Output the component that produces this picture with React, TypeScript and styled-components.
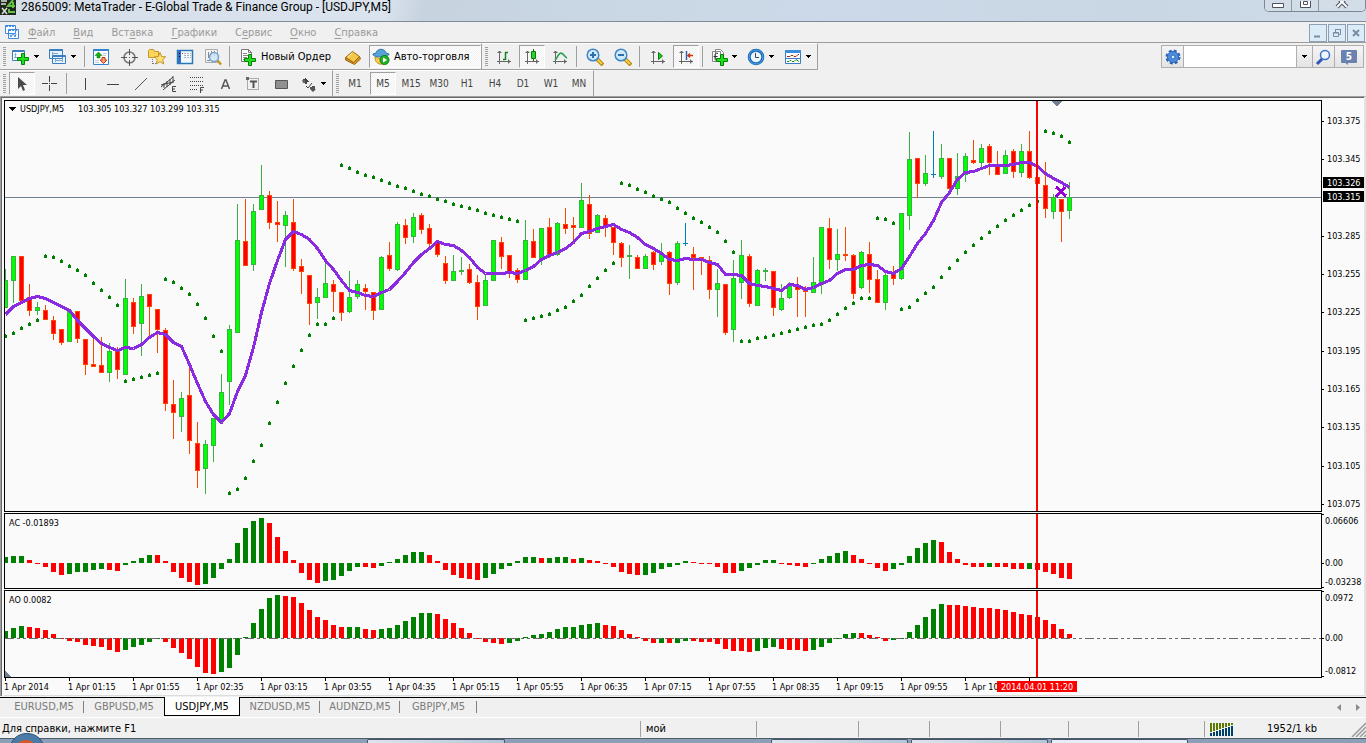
import React from "react";
import styled, { createGlobalStyle, css } from "styled-components";

const GlobalStyle = createGlobalStyle`
  *, *::before, *::after { box-sizing: border-box; }
  body { margin: 0; background: #f0f0f0; }
  button, input { font: inherit; color: inherit; }
`;

const UI_FONT = '"DejaVu Sans Condensed", "DejaVu Sans", sans-serif';
const GREEN = "#008000";
const RED = "#ff0000";

/* ---------- window shell ---------- */

const AppWindow = styled.div`
  display: flex;
  flex-direction: column;
  min-height: 100vh;
  overflow: hidden;
  background: #f0f0f0;
  color: #000;
  font: 11px/14px ${UI_FONT};
`;

const TitleBar = styled.header`
  display: flex;
  align-items: flex-start;
  height: 22px;
  border-bottom: 1px solid #7f8a9b;
  background: linear-gradient(100deg, #d6dfe9 0%, #dbe4ee 28%, #c7d3df 31%, #c9d6e3 42%, #ccd9e8 60%, #c9d6e4 84%, #d0dce8 100%);
`;

const AppTitle = styled.h1`
  flex: 1;
  margin: 0;
  padding-left: 5px;
  font: 400 12px/14px Roboto, "Open Sans", sans-serif;
  white-space: nowrap;
`;

const CaptionButtons = styled.div`
  display: flex;
  height: 12px;
  border: 1px solid #7c8796;
  border-top: 0;
  border-radius: 0 0 5px 5px;
  overflow: hidden;
`;

const CaptionButton = styled.button<{ $wide?: boolean }>`
  width: ${(p) => (p.$wide ? 46 : 27)}px;
  padding: 0;
  border: 0;
  border-right: 1px solid #8d98a6;
  background: #d3dde8;
  line-height: 0;
  &:last-child { border-right: 0; }
`;

const MenuBar = styled.nav`
  display: flex;
  align-items: center;
  height: 21px;
  padding: 1px 0 0 5px;
  border-bottom: 1px solid #9c9c9c;
  line-height: 0;
`;

const MenuItem = styled.button`
  margin-left: 9px;
  padding: 0;
  padding-right: 9px;
  border: 0;
  background: none;
  color: #9a9a9a;
  font: 11px/14px ${UI_FONT};
  &:first-of-type { margin-left: 8px; }
  u { text-underline-offset: 2px; }
`;

const MdiButtons = styled.div`
  display: flex;
  gap: 1px;
  margin-left: auto;
  padding-right: 1px;
`;

const MdiButton = styled.button`
  width: 18px;
  height: 18px;
  padding: 0;
  border: 1px solid #90a0b4;
  background: #dcebf8;
  line-height: 0;
`;

/* ---------- toolbars ---------- */

const ToolbarRow = styled.div`
  display: flex;
`;

const Toolbar = styled.div`
  display: flex;
  align-items: center;
  height: 27px;
  border: 1px solid #a0a0a0;
  border-top-color: #fff;
  border-left: 0;
`;

const LowerToolbar = styled(Toolbar)`
  height: 26px;
  border-bottom: 0;
`;

const Grip = styled.span`
  flex: none;
  width: 3px;
  height: 19px;
  margin: 0 2px 0 3px;
  background: repeating-linear-gradient(#a0a0a0 0 1px, transparent 1px 2px);
`;

const Separator = styled.span<{ $w?: number }>`
  flex: none;
  width: 1px;
  height: 21px;
  margin: 0 ${(p) => (p.$w ?? 5) - 3}px 0 2px;
  background: #a0a0a0;
`;

const pressed = css`
  background: repeating-conic-gradient(#fff 0 25%, #f0f0f0 0 50%) 0 0 / 2px 2px;
  border-color: #a0a0a0 #fff #fff #a0a0a0;
`;

const ToolButton = styled.button<{ $pressed?: boolean }>`
  display: flex;
  align-items: center;
  justify-content: center;
  width: 26px;
  height: 23px;
  margin: 0 1px;
  padding: 0;
  border: 1px solid transparent;
  background: none;
  ${(p) => p.$pressed && pressed}
`;

const DropButton = styled.button`
  display: flex;
  align-items: center;
  gap: 3px;
  width: 37px;
  height: 23px;
  padding: 0 0 0 4px;
  border: 0;
  background: none;
`;

const TextButton = styled.button<{ $pressed?: boolean }>`
  display: flex;
  align-items: center;
  gap: 4px;
  height: 23px;
  padding: 1px 5px 0 2px;
  border: 1px solid transparent;
  background: none;
  white-space: nowrap;
  ${(p) => p.$pressed && pressed}
`;

const OrderButton = styled(TextButton)`
  width: 107px;
  padding-left: 7px;
`;

const AutoButton = styled(TextButton)`
  width: 112px;
  margin-left: 2px;
`;

const PeriodButton = styled(ToolButton)`
  color: #444;
  font-size: 10px;
`;

const SearchGroup = styled.form`
  display: flex;
  flex: none;
  height: 23px;
  margin: 2px 2px 0 auto;
  border: 1px solid #aeaeae;
`;

const SearchButton = styled.button<{ $w: number }>`
  display: flex;
  align-items: center;
  justify-content: center;
  width: ${(p) => p.$w}px;
  padding: 0;
  border: 0;
  border-right: 1px solid #aeaeae;
  background: linear-gradient(#f4f4f4, #e4e4e4);
  &:last-child { border-right: 0; }
`;

const SearchInput = styled.input`
  width: 113px;
  min-width: 0;
  padding: 0 4px;
  border: 0;
  border-right: 1px solid #aeaeae;
  background: #fff;
  outline: none;
`;

const ChatBubble = styled.span`
  position: relative;
  width: 16px;
  height: 13px;
  border-radius: 1px;
  background: #6b82b0;
  color: #fff;
  font: 700 10px/13px ${UI_FONT};
  text-align: center;
  &::after {
    content: "";
    position: absolute;
    left: 3px;
    top: 12px;
    border: solid transparent;
    border-width: 0 0 4px 4px;
    border-right: 0;
    border-top: 3px solid #6b82b0;
  }
`;

/* ---------- chart ---------- */

const ChartWindow = styled.main`
  display: flex;
  flex-direction: column;
  gap: 1px;
  padding: 3px 0 0 3px;
  border: solid #a0a0a0;
  border-width: 1px 0 0 1px;
  border-right: 2px solid #e3e3e3;
  background: #fafafa;
  box-shadow: inset 1px 1px 0 #696969;
`;

const ChartPanel = styled.section<{ $h: number }>`
  display: flex;
  height: ${(p) => p.$h}px;
  svg { display: block; }
`;

const Plot = styled.div`
  flex: 1;
  min-width: 0;
  border: 1px solid #000;
  overflow: hidden;
`;

const AxisText = styled.text<{ $fill?: string }>`
  font: 9px ${UI_FONT};
  fill: ${(p) => p.$fill ?? "#000"};
  white-space: pre;
`;

const TimeAxis = styled.div`
  height: 18px;
  margin-top: -1px;
  border-bottom: 1px solid #dcdcdc;
  svg { display: block; }
`;

/* ---------- bottom ---------- */

const TabStrip = styled.div`
  display: flex;
  align-items: flex-start;
  height: 20px;
  margin-top: 1px;
  border-top: 1px solid #000;
`;

const ChartTab = styled.button<{ $active?: boolean }>`
  width: 80px;
  height: 19px;
  padding: 0 0 2px;
  border: 0;
  background: none;
  color: #7a7a7a;
  font: 11px/16px ${UI_FONT};
  ${(p) =>
    p.$active
      ? css`
          width: 76px;
          margin-top: -1px;
          padding: 1px 0 0;
          border: 1px solid #000;
          border-top: 0;
          background: #fff;
          color: #000;
        `
      : css`
          background: linear-gradient(#808080, #808080) right 3px / 1px 12px no-repeat;
        `}
`;

const FirstTab = styled(ChartTab)`
  margin-left: 4px;
`;

const PlainTab = styled(ChartTab)`
  background: none;
`;

const LastTab = styled(ChartTab)`
  width: 77px;
`;

const TabScroll = styled.div`
  display: flex;
  gap: 8px;
  margin-left: auto;
  padding: 3px 4px 0 0;
`;

const ScrollButton = styled.button`
  width: 9px;
  height: 12px;
  padding: 0;
  border: 0;
  background: none;
  line-height: 0;
`;

const StatusBar = styled.footer`
  display: flex;
  align-items: center;
  height: 21px;
  padding-top: 2px;
  border-top: 1px solid #fff;
`;

const StatusCell = styled.div<{ $w?: number }>`
  display: flex;
  align-items: center;
  ${(p) => (p.$w ? `width: ${p.$w}px;` : "flex: 1;")}
  height: 16px;
  padding-left: ${(p) => (p.$w ? 5 : 2)}px;
  border-left: ${(p) => (p.$w ? "1px solid #a0a0a0" : "0")};
  white-space: nowrap;
`;

const Traffic = styled.span`
  flex: 1;
  padding-left: 33px;
`;

const Taskbar = styled.div`
  display: flex;
  height: 5px;
  border-top: 1px solid #4e5c6c;
  background: #8ba0b6;
`;

const TaskSpacer = styled.span<{ $w: number }>`
  width: ${(p) => p.$w}px;
`;

const TaskItem = styled.span<{ $w: number; $light?: boolean }>`
  width: ${(p) => p.$w}px;
  margin-right: 3px;
  border: 1px solid #45566a;
  border-bottom: 0;
  border-radius: 2px 2px 0 0;
  background: ${(p) => (p.$light ? "#e6edf4" : "linear-gradient(90deg, #dde5ee, #b4c5d8)")};
`;

const StartOrb = styled.span`
  position: relative;
  z-index: 1;
  width: 34px;
  height: 9px;
  margin: -6px 0 0 10px;
  line-height: 0;
`;

/* ---------- icons ---------- */

type IconProps = { children: React.ReactNode; w?: number; h?: number };
const Icon = ({ children, w = 18, h = 18 }: IconProps) => (
  <svg width={w} height={h} viewBox={`0 0 ${w} ${h}`} fill="none" aria-hidden="true">
    {children}
  </svg>
);

const Caret = () => (
  <Icon w={7} h={4}><path d="M1 0h5v1H5v1H4v1H3V2H2V1H1z" fill="#000" /></Icon>
);

const Plus = ({ x, y }: { x: number; y: number }) => (
  <path d={`M${x + 4.5} ${y + 0.5}h3v4h4v3h-4v4h-3v-4h-4v-3h4z`} fill="#1fe01f" stroke="#068006" />
);

const AppLogo = () => (
  <Icon w={16} h={16}>
    <path d="M0 0h16v15H0z" fill="#20261f" />
    <path d="M1 1h6M1 4h5M2 8l5 6M7 8l-5 6" stroke="#d9e4d2" strokeWidth="1.500" />
    <path d="M13 0L8 6h7M13 2v6M9 9v3h6" stroke="#66c044" strokeWidth="2" />
  </Icon>
);

const DocIcon = () => (
  <Icon w={15} h={15}>
    <path d="M.5.500h10v8H.5zM3.500 4.500h10v9h-10z" fill="#fff" stroke="#3d8be0" />
    <path d="M1 1.500h10M4 5.500h10" stroke="#3d8be0" strokeDasharray="2 1" />
    <path d="M5 9.500l1 2.500 2-4 2 4 1-3" stroke="#3d8be0" />
  </Icon>
);

const NewChartIcon = () => (
  <Icon>
    <path d="M.5 2.500h12v10H.5z" fill="#fff" stroke="#3b7dc0" />
    <path d="M1 3h11" stroke="#3b7dc0" strokeWidth="2" />
    <path d="M3.500 5v5M2 9.500h7M2.500 6.500h2" stroke="#7ea8cc" />
    <Plus x={5} y={5} />
  </Icon>
);
const ProfilesIcon = () => (
  <Icon>
    <path d="M.5 1.500h13v9H.5zM3.500 7.500h13v8h-13z" fill="#e9f3fc" stroke="#3b7dc0" />
    <path d="M1 2h12M4 8h12" stroke="#3b7dc0" strokeWidth="2" />
    <path d="M3 5.500h6M3.500 4v3M6 12.500h8M6.500 11v3M13.500 11v3" stroke="#7ea8cc" />
  </Icon>
);
const MarketIcon = () => (
  <Icon>
    <path d="M1.500 1.500h15v15h-15z" fill="#fff" stroke="#3184cf" />
    <path d="M1 2h16" stroke="#3184cf" strokeWidth="2" />
    <path d="M11 5.500h4M11 7.500h3M3 12.500h4M3 14.500h4" stroke="#b8cce0" />
    <path d="M6.500 4L10 7.500H8V10H5V7.500H3z" fill="#10b010" stroke="#087008" strokeWidth=".5" />
    <path d="M11.500 15.500L15 12h-2v-2.500h-3V12H8z" fill="#f8a070" stroke="#c03a10" />
  </Icon>
);
const TargetIcon = () => (
  <Icon>
    <circle cx="9.500" cy="9.500" r="5.500" stroke="#777" strokeWidth="1.500" />
    <path d="M9.500 1v6M9.500 12v6M1 9.500h6M12 9.500h6" stroke="#555" />
    <path d="M9 9.500h1" stroke="#555" />
  </Icon>
);
const StarFolderIcon = () => (
  <Icon>
    <path d="M.5 2.500l1-1h4l1 2h4v6H.5z" fill="#ffd65a" stroke="#c4932a" />
    <path d="M4.500 11v5M5 15.500h3" stroke="#777" strokeDasharray="1 1" />
    <path d="M12 4.500l1.700 4 4 .3-3 2.800 1 4.400-3.700-2.300L8.300 16l1-4.400-3-2.800 4-.3z" fill="#ffe070" stroke="#c4932a" />
  </Icon>
);
const NavigatorIcon = () => (
  <Icon>
    <path d="M1.500 2.500h15v13h-15z" fill="#f4f9fe" stroke="#2a78b8" strokeWidth="1.500" />
    <path d="M2 3v12h3V3z" fill="#2f70c0" />
    <path d="M3.500 5v1M3.500 8v1" stroke="#111" />
    <path d="M8 5.500h7M8 7.500h7M8 9.500h7" stroke="#a8b4c0" strokeDasharray="2 1" />
    <path d="M6 5.500h1" stroke="#d22" />
  </Icon>
);
const TesterIcon = () => (
  <Icon>
    <path d="M1.500 1.500h12v13h-12z" fill="#f4f4f4" stroke="#aaa" />
    <path d="M4.500 4v6M7.500 3v6M10.500 3v5M3 12.500h3" stroke="#888" />
    <circle cx="10" cy="9" r="4.500" fill="#cfe6f8" fillOpacity=".8" stroke="#74a6d2" strokeWidth="1.500" />
    <path d="M13.500 12.500l3.500 4" stroke="#c99322" strokeWidth="2.500" />
  </Icon>
);
const OrderIcon = () => (
  <Icon w={17}>
    <path d="M1.500 1.500h7l3 3v9h-10z" fill="#fff" stroke="#777" />
    <path d="M8.500 1.500v3h3" stroke="#777" />
    <path d="M3 5.500h4M3 7.500h6M3 9.500h4M3 11.500h3" stroke="#888" />
    <Plus x={4} y={6} />
  </Icon>
);
const BookIcon = () => (
  <Icon>
    <path d="M1.500 9.500l7-6 7 5-6 6z" fill="#f5c74a" stroke="#9f6a10" />
    <path d="M1.500 9.500V12l9 4.500 6-5.500-1-2.500-6 6z" fill="#d59420" stroke="#9f6a10" />
    <path d="M4 9l4-4" stroke="#fff0b8" />
  </Icon>
);
const AutoIcon = () => (
  <Icon>
    <path d="M4 5c1-5 9-5 10 0l3 1c0 4-17 4-16 0z" fill="#56a4d6" stroke="#2d79ad" />
    <path d="M3 9c0 10 12 9 12 0-4 2-8 2-12 0z" fill="#ffd14b" stroke="#bd8b1c" />
    <circle cx="12.500" cy="12" r="4.500" fill="#26b526" stroke="#0b7a0b" />
    <path d="M11 9.500l4 2.500-4 2.500z" fill="#fff" />
  </Icon>
);

const Axes = () => <path d="M4.500 3v13M2 13.500h14M2.500 4.500h4M3.500 3.500h2M13.500 11.500v4M14.500 12.500v2" stroke="#666" />;
const BarsIcon = () => <Icon><Axes /><path d="M10.500 4v8M10 4.500h3M8 11.500h2" stroke="#16831a" strokeWidth="1.500" /></Icon>;
const CandlesIcon = () => <Icon><Axes /><path d="M10.500 1v12" stroke="#0a6a0a" /><path d="M8.500 3.500h4v7h-4z" fill="#28d428" stroke="#0a7a0a" /></Icon>;
const LineIcon = () => <Icon><Axes /><path d="M4 12c3-2 3-7 6-7 3 1 4 4 6 5" stroke="#23a04a" strokeWidth="1.500" /></Icon>;
const ScrollIcon = () => <Icon><Axes /><path d="M9.500 4.500l4 3.500-4 3.500z" fill="#24c424" stroke="#0a7a0a" /></Icon>;
const ShiftIcon = () => <Icon><Axes /><path d="M9.500 3v9" stroke="#2a66a8" strokeWidth="1.500" /><path d="M16 7.500h-5M13 5.500l-2 2 2 2" stroke="#c33a10" strokeWidth="1.500" /></Icon>;

const ZoomIcon = ({ plus }: { plus?: boolean }) => (
  <Icon>
    <path d="M11 11l6 6" stroke="#b8860b" strokeWidth="4" />
    <path d="M11 11l5 5" stroke="#f0cf4a" strokeWidth="2" />
    <circle cx="7" cy="7" r="5.800" fill="#cfe9fb" stroke="#3f86c6" strokeWidth="1.500" />
    <path d={plus ? "M4 7h6M7 4v6" : "M4 7h6"} stroke="#2f6ea8" strokeWidth="2" />
  </Icon>
);
const IndicatorIcon = () => (
  <Icon>
    <path d="M5.500 1.500h5l3 3v8h-8zM2.500 3.500h8v10h-8z" fill="#fff" stroke="#888" />
    <path d="M8 5.500c-2-1-3 0-3 2v4M3.500 8.500h4" stroke="#333" />
    <Plus x={6} y={6} />
  </Icon>
);
const ClockIcon = () => (
  <Icon>
    <circle cx="9" cy="9" r="6.800" fill="#eaf4fd" stroke="#1766b4" strokeWidth="3" />
    <circle cx="9" cy="9" r="7" stroke="#51a5ec" />
    <path d="M8.500 5v4.500H12" stroke="#444" />
  </Icon>
);
const TemplateIcon = () => (
  <Icon>
    <path d="M1.500 2.500h15v13h-15z" fill="#fff" stroke="#3b7dc0" />
    <path d="M1 3.500h16" stroke="#3b8ddb" strokeWidth="3" />
    <path d="M2 10.500h14" stroke="#3b7dc0" />
    <path d="M3 8.500h3l1-1h2l1 1h2l2-2h1" stroke="#a02a10" />
    <path d="M3 13.500h2l1-1h1l1 1h2l2-2 3 2" stroke="#1a8a2a" />
  </Icon>
);

const CursorIcon = () => <Icon><path d="M5 2v12l3-3 2 5 2-1-2-5h4z" fill="#4a4a4a" /></Icon>;
const CrossIcon = () => <Icon><path d="M8.500 1v6M8.500 10v6M1 8.500h6M10 8.500h6M8 8.500h1" stroke="#444" /></Icon>;
const VLineIcon = () => <Icon><path d="M9.500 3v12" stroke="#444" /></Icon>;
const HLineIcon = () => <Icon><path d="M3 9.500h12" stroke="#444" /></Icon>;
const TrendIcon = () => <Icon><path d="M3 15L15 3" stroke="#555" /></Icon>;
const ChannelIcon = () => (
  <Icon>
    <path d="M1 12L13 2M3 15L15 5M4 8v5M7 6v6M10 4v6M13 1v7M1 10l12-3" stroke="#444" />
    <path d="M16 11.500h-3.500v5H16M12.500 14H15" stroke="#444" />
  </Icon>
);
const FiboIcon = () => (
  <Icon>
    <path d="M2 2.500h13M2 6.500h13M2 10.500h13M2 14.500h8" stroke="#444" strokeDasharray="1 1" />
    <path d="M16 12.500h-3.500V18M12.500 15H15" stroke="#444" />
  </Icon>
);
const LetterIcon = () => <Icon><path d="M5.500 14L9 5h1l3.500 9M7 11h5" stroke="#555" strokeWidth="1.500" /></Icon>;
const LabelIcon = () => (
  <Icon>
    <path d="M3.500 3.500h11v11h-11z" stroke="#666" strokeDasharray="1 1" />
    <path d="M6 6.500h7M9.500 6v7" stroke="#555" strokeWidth="2" />
    <path d="M2 2h3v3H2z" fill="#666" />
  </Icon>
);
const RectIcon = () => <Icon><path d="M3.500 5.500h12v8h-12z" fill="#909090" stroke="#555" /></Icon>;
const ArrowsIcon = () => (
  <Icon>
    <path d="M6 3h1v1h1v1h1v1h1v1H8v2H6V7H4V6h1V5H4V4h2z" fill="#444" />
    <path d="M3 5h3v3H4z" fill="#666" />
    <path d="M7 11l2 2 4-5" stroke="#444" />
    <path d="M11 12h2v-1h3v3h1l-3 3-3-3z" fill="#555" />
  </Icon>
);

const GearIcon = () => (
  <Icon>
    <circle cx="9" cy="9" r="5.500" fill="#4d8ee0" stroke="#2b63b4" />
    <circle cx="9" cy="9" r="6.500" stroke="#2b63b4" strokeWidth="2" strokeDasharray="3 2.100" />
    <circle cx="9" cy="9" r="2" fill="#dcecff" stroke="#2b63b4" />
  </Icon>
);
const SearchIcon = () => (
  <Icon>
    <path d="M7 11l-5 5" stroke="#2a56b8" strokeWidth="3" />
    <circle cx="10" cy="7" r="4.500" fill="#eef7ff" stroke="#3f6fc8" strokeWidth="1.500" />
  </Icon>
);

/* ---------- market data, in plot pixels ---------- */

// Candle: kind, high, body top, body bottom, low
type Candle = ["g" | "r" | "b", number, number, number, number];
const candles: Candle[] = [
  ["g",269,280,308,308],["g",256,256,281,303],["r",256,256,301,301],["r",284,297,311,316],["g",302,307,311,315],
  ["r",305,310,320,320],["r",316,320,334,340],["r",329,329,343,345],["g",310,310,342,342],["r",311,311,339,343],
  ["r",339,339,365,375],["r",334,364,367,367],["r",337,365,373,373],["g",343,351,373,382],["r",347,351,370,379],
  ["g",279,298,375,375],["r",298,302,327,334],["g",284,296,324,356],["r",294,294,307,336],["r",309,309,330,353],
  ["r",328,330,404,411],["r",380,404,413,439],["g",392,398,417,432],["r",366,395,441,454],["r",422,443,471,488],
  ["g",440,444,469,494],["g",418,418,446,462],["g",374,392,421,423],["g",325,329,382,405],["g",204,240,333,333],
  ["r",199,241,266,266],["g",204,211,265,271],["g",165,195,210,210],["r",191,195,223,229],["r",201,222,225,242],
  ["g",211,215,226,267],["r",199,222,269,271],["r",259,266,272,294],["r",275,275,304,325],["g",288,297,303,319],
  ["g",259,283,298,298],["r",280,284,292,312],["r",292,292,313,321],["g",271,297,312,313],["g",280,284,297,299],
  ["r",284,288,292,310],["r",292,292,311,320],["g",256,257,310,310],["r",242,255,269,271],["g",222,224,270,271],
  ["r",219,225,238,244],["g",213,217,237,243],["r",213,215,230,234],["r",224,228,244,248],["r",242,242,255,257],
  ["r",256,263,281,284],["g",255,271,281,281],["g",257,270,272,275],["r",264,269,283,284],["r",275,282,307,320],
  ["g",275,280,306,306],["g",240,240,281,281],["r",237,242,257,269],["r",255,255,272,278],["r",268,270,280,283],
  ["g",220,240,280,280],["r",229,241,258,258],["g",228,228,260,265],["r",218,227,256,258],["g",222,223,255,256],
  ["r",208,224,229,234],["r",217,225,228,243],["g",183,200,228,228],["r",195,204,234,239],["g",214,215,233,233],
  ["r",215,218,226,237],["r",227,227,243,255],["r",242,243,258,267],["g",245,255,257,279],["r",255,257,269,269],
  ["g",254,256,269,269],["r",251,252,265,270],["g",243,254,262,265],["r",251,252,284,295],["g",241,243,283,285],
  ["b",223,243,244,246],["r",247,254,258,290],["r",257,257,261,275],["r",256,260,290,299],["g",269,283,290,317],
  ["r",284,284,333,335],["g",260,278,330,342],["g",240,255,283,299],["r",254,256,304,307],["g",269,270,306,306],
  ["g",268,270,272,281],["r",271,271,308,316],["g",284,298,310,311],["g",282,286,298,299],["r",277,286,290,317],
  ["r",286,288,292,317],["g",257,282,293,293],["g",227,227,285,294],["r",218,228,260,269],["g",229,254,260,271],
  ["r",227,254,256,261],["r",254,255,294,299],["g",251,252,288,289],["r",242,254,280,293],["r",270,279,303,303],
  ["g",272,275,303,310],["r",266,273,279,285],["g",213,213,279,280],["g",132,159,216,230],["r",158,158,184,198],
  ["g",155,173,184,186],["b",131,174,175,178],["g",144,158,177,179],["r",158,158,189,192],["g",153,176,189,195],
  ["g",153,156,175,182],["r",140,160,163,164],["g",144,148,163,167],["r",144,146,163,175],["r",151,165,175,175],
  ["g",150,155,174,174],["r",149,151,172,178],["g",144,151,173,177],["r",131,151,178,179],["r",163,177,184,192],
  ["r",162,185,209,218],["g",194,197,212,219],["r",199,199,212,242],["g",182,197,211,219],
];

const average = [
  314,306,302,298,296,298,302,306,310,320,328,336,343,347,350,347,348,344,337,332,334,342,346,364,383,401,414,422,
  413,391,375,347,312,283,260,239,231,234,239,248,260,269,280,290,292,295,296,292,289,281,272,262,254,248,241,244,
  245,250,257,267,273,273,273,272,273,270,266,259,255,252,248,242,233,231,228,226,224,229,232,237,244,248,253,259,
  260,258,259,259,262,264,274,274,275,283,285,286,288,290,284,285,289,287,283,280,273,269,269,265,264,265,271,273,
  268,256,243,233,220,202,192,179,172,171,168,165,165,165,164,162,162,166,173,178,182,187,
];

const sar = [
  336,333,328,324,320,256,257,261,266,270,275,283,290,297,305,381,379,377,375,373,279,282,288,294,304,318,336,351,
  493,489,478,461,445,423,402,383,366,350,335,324,324,318,165,168,172,175,177,180,183,186,188,191,194,196,199,201,
  204,206,208,210,213,215,217,219,221,320,318,316,314,310,307,301,295,286,278,270,263,183,185,189,192,196,199,202,
  208,213,218,222,227,232,241,252,341,341,338,337,335,333,331,329,327,325,324,320,314,308,303,298,298,218,219,223,
  309,307,300,293,287,277,268,260,252,245,238,232,226,220,215,210,205,201,131,133,136,142,
];

const acBars = [
  6,7,7,3,-1,-4,-9,-12,-11,-9,-9,-7,-6,-7,-8,-2,2,5,8,8,2,-9,-15,-19,-22,-21,-15,-6,4,20,35,42,45,40,26,12,3,-10,
  -17,-20,-18,-17,-13,-8,-4,-4,-5,-3,1,4,8,11,11,8,2,-7,-12,-15,-16,-17,-15,-11,-6,-3,2,6,6,5,5,6,6,4,5,3,2,-1,-4,
  -9,-11,-12,-12,-10,-6,-4,-2,2,1,-1,-1,-4,-10,-10,-8,-5,-2,3,3,-1,-2,-3,-4,-1,4,7,10,12,8,4,-1,-5,-8,-6,-2,7,15,
  20,23,21,11,4,-2,-4,-4,-4,-4,-4,-6,-6,-6,-7,-9,-11,-15,-16,
];
const acColors =
  "gggrrrrrgggggrrggggrrrrrrggggggggrrrrrrrgggggrrggggggrrrrrrrgggggggrgggrgrrrrrrrggggggrrrrrrgggggrrrrgggggrrrrrggggggrrrrrrgrrrrgrrrrr";

const aoBars = [
  7,10,12,11,10,8,4,-1,-3,-4,-7,-8,-9,-12,-14,-12,-9,-7,-4,-1,-4,-10,-15,-21,-29,-35,-36,-34,-30,-17,1,15,29,40,43,
  42,41,35,28,21,18,13,11,11,11,9,8,9,10,13,17,21,25,25,24,19,15,10,5,-1,-4,-5,-6,-5,-3,1,3,4,6,9,11,11,13,14,15,
  13,12,8,4,1,-3,-5,-5,-5,-5,-3,-3,-4,-4,-6,-11,-13,-13,-14,-13,-10,-9,-11,-12,-12,-13,-12,-9,-5,-1,4,5,5,3,1,-3,
  -2,-1,6,13,21,29,34,33,33,32,31,30,30,29,28,26,24,23,21,18,14,9,4,
];
const aoColors =
  "gggrrrrrrrrrrrrgggggrrrrrrrggggggggrrrrrrrrggrrgggggggrrrrrrrrrggggggggggggrrrrrrrgrggrrrrrrrrgggrrrrggggggrrrrgggggggrrrrrrrrrrrrrrrr";

const PLOT_TOP = 101;
const STEP = 8;
const priceTicks: [number, string][] = [
  [121, "103.375"], [159, "103.345"], [236, "103.285"], [274, "103.255"], [312, "103.225"], [351, "103.195"],
  [389, "103.165"], [427, "103.135"], [466, "103.105"], [504, "103.075"],
];
const times = ["2014", "01:15", "01:55", "02:35", "03:15", "03:55", "04:35", "05:15", "05:55", "06:35", "07:15", "07:55", "08:35", "09:15", "09:55", "10:35"];

const CandleMark = ({ c, x }: { c: Candle; x: number }) => {
  const [kind, high, top, bottom, low] = c;
  const edge = { g: "#3cb043", r: "#ff4500", b: "#0080c0" }[kind];
  return (
    <>
      <rect x={x} y={high} width="1" height={Math.max(low - high, 1)} fill={edge} />
      <rect x={x - 2} y={top} width="5" height={bottom - top} fill={edge} />
      {bottom - top > 2 && (
        <rect x={x - 1} y={top + 1} width="3" height={bottom - top - 2} fill={kind === "g" ? "#00ff00" : RED} />
      )}
    </>
  );
};

const Bars = ({ data, colors, base }: { data: number[]; colors: string; base: number }) => (
  <>
    {data.map((v, i) => (
      <rect key={i} x={i * STEP - 2} y={v > 0 ? base - v : base} width="5" height={Math.abs(v)} fill={colors[i] === "g" ? GREEN : RED} />
    ))}
  </>
);

const Cursor = () => <rect x="1031" y="0" width="2" height="100%" fill={RED} />;

const PricePanel = () => (
  <ChartPanel $h={412} aria-label="USDJPY,M5">
    <Plot>
      <svg width="100%" height="410" shapeRendering="crispEdges">
        <rect x="0" y="96" width="100%" height="1" fill="#708090" />
        <path d="M1046 0h11l-5 5z" fill="#708090" />
        <g transform={`translate(0 ${-PLOT_TOP})`}>
          {candles.map((c, i) => <CandleMark key={i} c={c} x={i * STEP} />)}
          <polyline points={average.map((y, i) => `${i * STEP + 0.5},${y + 0.5}`).join(" ")} fill="none" stroke="#8a2be2" strokeWidth="3" strokeLinejoin="round" />
          {sar.map((y, i) => (
            <path key={i} d={`M${i * STEP} ${y - 2}h1v1h1v3h-3v-3h1z`} fill={GREEN} />
          ))}
          <path d="M1051 187l10 9M1060 187l-9 10" stroke="#9400d3" strokeWidth="3" />
        </g>
        <Cursor />
        <path d="M3 6h8l-4 4z" fill="#000" />
        <AxisText x="15" y="11">USDJPY,M5</AxisText>
        <AxisText x="73" y="11">103.305 103.327 103.299 103.315</AxisText>
      </svg>
    </Plot>
    <svg width="42" height="412">
      {priceTicks.map(([y, label]) => (
        <React.Fragment key={label}>
          <rect x="0" y={y - 100} width="2" height="1" fill="#000" />
          <AxisText x="5" y={y - 97}>{label}</AxisText>
        </React.Fragment>
      ))}
      <rect x="1" y="77" width="41" height="11" fill="#000" />
      <AxisText x="5" y="86" $fill="#fff">103.326</AxisText>
      <rect x="1" y="91" width="41" height="11" fill="#000" />
      <AxisText x="5" y="100" $fill="#fff">103.315</AxisText>
    </svg>
  </ChartPanel>
);

type IndicatorProps = { height: number; title: string; data: number[]; colors: string; base: number; dashed?: boolean; labels: [number, string][] };
const IndicatorPanel = ({ height, title, data, colors, base, dashed, labels }: IndicatorProps) => (
  <ChartPanel $h={height} aria-label={title}>
    <Plot>
      <svg width="100%" height={height - 2} shapeRendering="crispEdges">
        <Bars data={data} colors={colors} base={base} />
        {dashed && <line x1="0" x2="100%" y1={base + 0.5} y2={base + 0.5} stroke="#696969" strokeDasharray="9 3 3 3 3 3" />}
        {dashed && <path d={`M0 ${height - 8}l6 6H0z`} fill="#708090" />}
        <Cursor />
        <AxisText x="4" y="12">{title}</AxisText>
      </svg>
    </Plot>
    <svg width="42" height={height}>
      {[1, base + 1, height - 2].map((y) => <rect key={y} x="0" y={y} width="2" height="1" fill="#000" />)}
      {labels.map(([y, label]) => <AxisText key={label} x="3" y={y}>{label}</AxisText>)}
    </svg>
  </ChartPanel>
);

const Periods = ["M1", "M5", "M15", "M30", "H1", "H4", "D1", "W1", "MN"];

export default function App() {
  return (
    <AppWindow>
      <GlobalStyle />
      <TitleBar>
        <AppLogo />
        <AppTitle>2865009: MetaTrader - E-Global Trade &amp; Finance Group - [USDJPY,M5]</AppTitle>
        <CaptionButtons>
          <CaptionButton aria-label="Свернуть"><Icon w={14} h={10}><path d="M1.500 2.500h11v4h-11z" fill="#fff" stroke="#4b5262" /></Icon></CaptionButton>
          <CaptionButton aria-label="Развернуть"><Icon w={14} h={10}><path d="M2.500-2.500h10v9h-10z" fill="#fff" stroke="#4b5262" /><path d="M5.500.5h4v3h-4z" stroke="#4b5262" /></Icon></CaptionButton>
          <CaptionButton $wide aria-label="Закрыть"><Icon w={14} h={10}><path d="M2-4l10 10M12-4L2 6" stroke="#4b5262" strokeWidth="4" /><path d="M2-4l10 10M12-4L2 6" stroke="#fff" strokeWidth="2" /></Icon></CaptionButton>
        </CaptionButtons>
      </TitleBar>

      <MenuBar>
        <DocIcon />
        <MenuItem><u>Ф</u>айл</MenuItem>
        <MenuItem><u>В</u>ид</MenuItem>
        <MenuItem>Вст<u>а</u>вка</MenuItem>
        <MenuItem><u>Г</u>рафики</MenuItem>
        <MenuItem>С<u>е</u>рвис</MenuItem>
        <MenuItem><u>О</u>кно</MenuItem>
        <MenuItem><u>С</u>правка</MenuItem>
        <MdiButtons>
          <MdiButton aria-label="Свернуть окно"><Icon w={16} h={16}><path d="M4 11.500h6" stroke="#7b8da3" strokeWidth="2" /></Icon></MdiButton>
          <MdiButton aria-label="Восстановить окно"><Icon w={16} h={16}><path d="M6.500 8V4.500h5v5H9M6 4.500h6M4.500 7.500h5v4h-5zM4 8h6" stroke="#7b8da3" /></Icon></MdiButton>
          <MdiButton aria-label="Закрыть окно"><Icon w={16} h={16}><path d="M5 5l6 6M11 5l-6 6" stroke="#7b8da3" strokeWidth="2" /></Icon></MdiButton>
        </MdiButtons>
      </MenuBar>

      <ToolbarRow>
        <Toolbar>
          <Grip />
          <DropButton aria-label="Новый график"><NewChartIcon /><Caret /></DropButton>
          <DropButton aria-label="Профили"><ProfilesIcon /><Caret /></DropButton>
          <Separator />
          <ToolButton aria-label="Обзор рынка"><MarketIcon /></ToolButton>
          <ToolButton aria-label="Окно данных"><TargetIcon /></ToolButton>
          <ToolButton aria-label="Навигатор"><StarFolderIcon /></ToolButton>
          <ToolButton aria-label="Терминал"><NavigatorIcon /></ToolButton>
          <ToolButton aria-label="Тестер стратегий"><TesterIcon /></ToolButton>
          <Separator />
          <OrderButton><OrderIcon />Новый Ордер</OrderButton>
          <ToolButton aria-label="MetaEditor"><BookIcon /></ToolButton>
          <AutoButton $pressed aria-pressed="true"><AutoIcon />Авто-торговля</AutoButton>
        </Toolbar>
        <Toolbar>
          <Grip />
          <ToolButton aria-label="Бары"><BarsIcon /></ToolButton>
          <ToolButton $pressed aria-label="Свечи"><CandlesIcon /></ToolButton>
          <ToolButton aria-label="Линия"><LineIcon /></ToolButton>
          <Separator $w={7} />
          <ToolButton aria-label="Увеличить"><ZoomIcon plus /></ToolButton>
          <ToolButton aria-label="Уменьшить"><ZoomIcon /></ToolButton>
          <Separator $w={7} />
          <ToolButton aria-label="Автопрокрутка"><ScrollIcon /></ToolButton>
          <ToolButton $pressed aria-label="Сдвиг графика"><ShiftIcon /></ToolButton>
          <Separator $w={6} />
          <DropButton aria-label="Индикаторы"><IndicatorIcon /><Caret /></DropButton>
          <DropButton aria-label="Периоды"><ClockIcon /><Caret /></DropButton>
          <DropButton aria-label="Шаблоны"><TemplateIcon /><Caret /></DropButton>
        </Toolbar>
        <SearchGroup>
          <SearchButton type="button" $w={22} aria-label="Настройки"><GearIcon /></SearchButton>
          <SearchInput aria-label="Поиск" />
          <SearchButton type="button" $w={16} aria-label="История поиска"><Caret /></SearchButton>
          <SearchButton type="button" $w={22} aria-label="Найти"><SearchIcon /></SearchButton>
          <SearchButton type="button" $w={28} aria-label="Сообщения"><ChatBubble>5</ChatBubble></SearchButton>
        </SearchGroup>
      </ToolbarRow>

      <ToolbarRow>
        <LowerToolbar>
          <Grip />
          <ToolButton $pressed aria-label="Курсор"><CursorIcon /></ToolButton>
          <ToolButton aria-label="Перекрестие"><CrossIcon /></ToolButton>
          <Separator $w={7} />
          <ToolButton aria-label="Вертикальная линия"><VLineIcon /></ToolButton>
          <ToolButton aria-label="Горизонтальная линия"><HLineIcon /></ToolButton>
          <ToolButton aria-label="Трендовая линия"><TrendIcon /></ToolButton>
          <ToolButton aria-label="Канал"><ChannelIcon /></ToolButton>
          <ToolButton aria-label="Линии Фибоначчи"><FiboIcon /></ToolButton>
          <ToolButton aria-label="Текст"><LetterIcon /></ToolButton>
          <ToolButton aria-label="Метка"><LabelIcon /></ToolButton>
          <ToolButton aria-label="Прямоугольник"><RectIcon /></ToolButton>
          <DropButton aria-label="Стрелки"><ArrowsIcon /><Caret /></DropButton>
        </LowerToolbar>
        <LowerToolbar>
          <Grip />
          {Periods.map((p) => (
            <PeriodButton key={p} $pressed={p === "M5"}>{p}</PeriodButton>
          ))}
        </LowerToolbar>
      </ToolbarRow>

      <ChartWindow>
        <PricePanel />
        <IndicatorPanel height={76} title="AC -0.01893" data={acBars} colors={acColors} base={49} labels={[[11, "0.06606"], [53, "0.00"], [72, "-0.03238"]]} />
        <IndicatorPanel height={88} title="AO 0.0082" data={aoBars} colors={aoColors} base={47} dashed labels={[[11, "0.0972"], [51, "0.00"], [84, "-0.0812"]]} />
        <TimeAxis>
          <svg width="100%" height="17">
            {times.map((t, i) => (
              <React.Fragment key={t}>
                <rect x={i * 64 + 1} y="0" width="1" height="3" fill="#000" />
                <AxisText x={i * 64} y="12">{`1 Apr ${t}`}</AxisText>
              </React.Fragment>
            ))}
            <rect x="1025" y="0" width="1" height="3" fill="#000" />
            <rect x="993" y="3" width="80" height="11" fill={RED} />
            <AxisText x="1033" y="12" textAnchor="middle" $fill="#fff">2014.04.01 11:20</AxisText>
          </svg>
        </TimeAxis>
      </ChartWindow>

      <TabStrip role="tablist">
        <FirstTab role="tab">EURUSD,M5</FirstTab>
        <PlainTab role="tab">GBPUSD,M5</PlainTab>
        <ChartTab role="tab" aria-selected="true" $active>USDJPY,M5</ChartTab>
        <ChartTab role="tab">NZDUSD,M5</ChartTab>
        <ChartTab role="tab">AUDNZD,M5</ChartTab>
        <LastTab role="tab">GBPJPY,M5</LastTab>
        <TabScroll>
          <ScrollButton aria-label="Назад"><Icon w={9} h={9}><path d="M5 1v7L1 4.500z" fill="#8a8a8a" /></Icon></ScrollButton>
          <ScrollButton aria-label="Вперёд"><Icon w={9} h={9}><path d="M3 1v7l4-3.500z" fill="#8a8a8a" /></Icon></ScrollButton>
        </TabScroll>
      </TabStrip>

      <StatusBar>
        <StatusCell>Для справки, нажмите F1</StatusCell>
        <StatusCell $w={116}>мой</StatusCell>
        <StatusCell $w={102} />
        <StatusCell $w={71} />
        <StatusCell $w={71} />
        <StatusCell $w={68} />
        <StatusCell $w={70} />
        <StatusCell $w={66} />
        <StatusCell $w={162}>
          <Icon w={24} h={13}>
            {[0, 1, 2, 3, 4, 5, 6, 7].map((i) => (
              <React.Fragment key={i}>
                <rect x={i * 3} y="0" width="2" height={9 - i} fill="#5f7a00" />
                <rect x={i * 3} y={10 - i} width="2" height={3 + i} fill="#003f66" />
              </React.Fragment>
            ))}
          </Icon>
          <Traffic>1952/1 kb</Traffic>
          <Icon w={15} h={15}><path d="M1 15L15 1M5 15L15 5M9 15l6-6M13 15l2-2" stroke="#9a9a9a" strokeWidth="1.500" /></Icon>
        </StatusCell>
      </StatusBar>

      <Taskbar>
        <StartOrb>
          <Icon w={34} h={10}>
            <ellipse cx="17" cy="16" rx="17" ry="15.500" fill="#4b7ba8" stroke="#2c4f70" />
            <ellipse cx="16" cy="12" rx="8" ry="5" fill="#d9562a" />
          </Icon>
        </StartOrb>
        <TaskSpacer $w={323} />
        <TaskItem $w={138} />
        <TaskSpacer $w={263} />
        <TaskItem $w={137} />
        <TaskItem $w={137} />
        <TaskItem $w={137} $light />
      </Taskbar>
    </AppWindow>
  );
}
